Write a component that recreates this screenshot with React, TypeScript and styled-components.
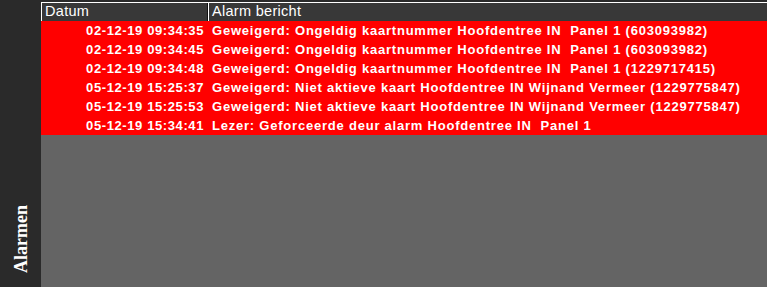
import React from 'react'
import styled, { createGlobalStyle } from 'styled-components'

const GlobalStyle = createGlobalStyle`
  html, body {
    margin: 0;
    padding: 0;
    background: #2a2a2a;
  }
`

const Screen = styled.div`
  display: flex;
  width: 767px;
  height: 287px;
  overflow: hidden;
  background: #2a2a2a;
`

const SideBar = styled.div`
  width: 41px;
  flex-shrink: 0;
  display: flex;
  flex-direction: column;
  justify-content: flex-end;
  align-items: center;
  padding-bottom: 14px;
  box-sizing: border-box;
`

const SideLabel = styled.div`
  writing-mode: vertical-rl;
  transform: rotate(180deg);
  font-family: "Liberation Serif", "Times New Roman", serif;
  font-weight: bold;
  font-size: 18px;
  color: #ffffff;
  line-height: 1;
`

const Main = styled.div`
  flex: 1;
  display: flex;
  flex-direction: column;
  padding-top: 2px;
`

const HeaderRow = styled.div`
  display: grid;
  grid-template-columns: 167px 1fr;
  height: 19px;
  box-sizing: border-box;
  border-top: 1px solid #ffffff;
  background: #383838;
`

const HeaderCell = styled.div<{ $last?: boolean }>`
  border-left: 1px solid #ffffff;
  border-right: ${p => (p.$last ? 'none' : '1px solid #111111')};
  padding-left: 3px;
  font-family: "Liberation Sans", Arial, sans-serif;
  font-size: 14.5px;
  letter-spacing: 0.3px;
  color: #ffffff;
  line-height: 17px;
  white-space: nowrap;
`

const Body = styled.div`
  flex: 1;
  background: #646464;
`

const AlarmRow = styled.div`
  display: grid;
  grid-template-columns: 167px 1fr;
  height: 19px;
  background: #ff0000;
  font-family: "Liberation Sans", Arial, sans-serif;
  font-weight: bold;
  font-size: 13px;
  color: #ffffff;
  line-height: 19px;
  white-space: pre;
`

const DateCell = styled.div`
  text-align: right;
  padding-right: 4px;
  letter-spacing: 0.6px;
`

const TextCell = styled.div`
  padding-left: 4px;
  letter-spacing: 0.78px;
`

const alarms = [
  { date: '02-12-19 09:34:35', text: 'Geweigerd: Ongeldig kaartnummer Hoofdentree IN  Panel 1 (603093982)' },
  { date: '02-12-19 09:34:45', text: 'Geweigerd: Ongeldig kaartnummer Hoofdentree IN  Panel 1 (603093982)' },
  { date: '02-12-19 09:34:48', text: 'Geweigerd: Ongeldig kaartnummer Hoofdentree IN  Panel 1 (1229717415)' },
  { date: '05-12-19 15:25:37', text: 'Geweigerd: Niet aktieve kaart Hoofdentree IN Wijnand Vermeer (1229775847)' },
  { date: '05-12-19 15:25:53', text: 'Geweigerd: Niet aktieve kaart Hoofdentree IN Wijnand Vermeer (1229775847)' },
  { date: '05-12-19 15:34:41', text: 'Lezer: Geforceerde deur alarm Hoofdentree IN  Panel 1' },
]

const App = () => {
  return (
    <Screen>
      <GlobalStyle />
      <SideBar>
        <SideLabel>Alarmen</SideLabel>
      </SideBar>
      <Main>
        <HeaderRow>
          <HeaderCell>Datum</HeaderCell>
          <HeaderCell $last>Alarm bericht</HeaderCell>
        </HeaderRow>
        <Body>
          {alarms.map((a, i) => (
            <AlarmRow key={`alarm_${i + 1}`}>
              <DateCell>{a.date}</DateCell>
              <TextCell>{a.text}</TextCell>
            </AlarmRow>
          ))}
        </Body>
      </Main>
    </Screen>
  )
}
export default App
